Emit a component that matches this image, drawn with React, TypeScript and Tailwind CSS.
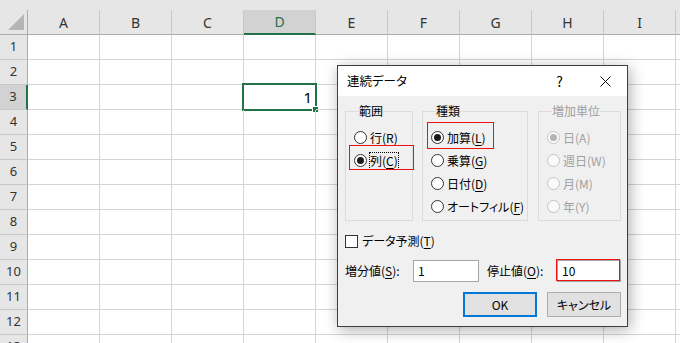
import React from 'react';

const cols = ['A', 'B', 'C', 'D', 'E', 'F', 'G', 'H', 'I'];
const rows = [1, 2, 3, 4, 5, 6, 7, 8, 9, 10, 11, 12, 13];

function Radio({ checked, disabled }: { checked?: boolean; disabled?: boolean }) {
  return (
    <span
      className={`flex h-[13px] w-[13px] shrink-0 items-center justify-center rounded-full border ${
        disabled ? 'border-[#c4c4c4] bg-[#fafafa]' : 'border-[#333] bg-white'
      }`}
    >
      {checked && (
        <span className={`h-[7px] w-[7px] rounded-full ${disabled ? 'bg-[#b4b4b4]' : 'bg-[#1a1a1a]'}`} />
      )}
    </span>
  );
}

function Option({
  text,
  hot,
  checked,
  disabled,
  focus,
}: {
  text: string;
  hot: string;
  checked?: boolean;
  disabled?: boolean;
  focus?: boolean;
}) {
  return (
    <div className="flex h-[23px] items-center gap-[3px]">
      <Radio checked={checked} disabled={disabled} />
      <span
        className={`leading-[16px] ${disabled ? 'text-[#a0a0a0]' : 'text-black'} ${
          focus ? 'outline-1 outline-dotted outline-[#000]' : ''
        }`}
      >
        {text}({disabled ? hot : <u className="underline-offset-2">{hot}</u>})
      </span>
    </div>
  );
}

function Group({
  label,
  width,
  disabled,
  children,
  className,
}: {
  label: string;
  width: string;
  disabled?: boolean;
  children: React.ReactNode;
  className?: string;
}) {
  return (
    <fieldset className={`${width} ${className ?? ''} border border-[#dcdcdc] pt-[7px] pb-[2px] pl-[8px]`}>
      <legend className={`ml-[5px] leading-[16px] ${disabled ? 'text-[#a0a0a0]' : 'text-black'}`}>{label}</legend>
      {children}
    </fieldset>
  );
}

function SeriesDialog() {
  return (
    <div className="absolute left-[337px] top-[65px] flex h-[262px] w-[291px] flex-col border border-[#3f3f3f] bg-[#f0f0f0] font-['Noto_Sans_CJK_JP',sans-serif] text-[12px] text-black shadow-[2px_3px_14px_rgba(0,0,0,0.32)] [font-feature-settings:'palt']">
      {/* title bar */}
      <div className="flex h-[30px] items-center bg-white pl-[9px]">
        <span className="flex-1 text-[12.5px]">連続データ</span>
        <span className="mr-[37px] text-[14px]">?</span>
        <svg width="11" height="11" viewBox="0 0 11 11" className="mr-[16px]">
          <path d="M0.5 0.5 L10.5 10.5 M10.5 0.5 L0.5 10.5" stroke="#111" strokeWidth="1" />
        </svg>
      </div>

      <div className="flex flex-col pt-[7px]">
        <div className="relative flex pl-[7px]">
          <Group label="範囲" width="w-[68px]">
            <Option text="行" hot="R" />
            <Option text="列" hot="C" checked focus />
          </Group>
          <Group label="種類" width="w-[106px]" className="ml-[9px]">
            <Option text="加算" hot="L" checked />
            <Option text="乗算" hot="G" />
            <Option text="日付" hot="D" />
            <Option text="オートフィル" hot="F" />
          </Group>
          <Group label="増加単位" width="w-[83px]" className="ml-[10px]" disabled>
            <Option text="日" hot="A" checked disabled />
            <Option text="週日" hot="W" disabled />
            <Option text="月" hot="M" disabled />
            <Option text="年" hot="Y" disabled />
          </Group>
          {/* red annotation boxes */}
          <div className="pointer-events-none absolute left-[11px] top-[42px] h-[25px] w-[65px] border border-[#ee1111]" />
          <div className="pointer-events-none absolute left-[89px] top-[19px] h-[27px] w-[67px] border border-[#ee1111]" />
        </div>

        {/* checkbox */}
        <div className="mt-[12px] flex h-[16px] items-center gap-[4px] pl-[7px]">
          <span className="h-[13px] w-[13px] border border-[#333] bg-white" />
          <span>
            データ予測(<u className="underline-offset-2">T</u>)
          </span>
        </div>

        {/* step / stop */}
        <div className="mt-[11px] flex h-[22px] items-center pl-[7px]">
          <span className="w-[68px]">
            増分値(<u className="underline-offset-2">S</u>):
          </span>
          <div className="flex h-[22px] w-[66px] items-center border border-[#a6a6a6] bg-white pl-[4px]">1</div>
          <span className="ml-[8px] w-[70px]">
            停止値(<u className="underline-offset-2">O</u>):
          </span>
          <div className="relative">
            <div className="flex h-[22px] w-[64px] items-center border border-[#a6a6a6] bg-white pl-[4px]">10</div>
            <div className="absolute -left-[1px] -top-[1px] h-[22px] w-[64px] border border-[#ee1111]" />
          </div>
        </div>

        {/* buttons */}
        <div className="mt-[10px] flex justify-end gap-[10px] pr-[6px]">
          <button className="flex h-[25px] w-[74px] items-center justify-center border-2 border-[#0078d7] bg-[#e1e1e1]">
            OK
          </button>
          <button className="flex h-[25px] w-[74px] items-center justify-center border border-[#adadad] bg-[#e1e1e1]">
            キャンセル
          </button>
        </div>
      </div>
    </div>
  );
}

export default function App() {
  return (
    <div className="relative h-[343px] w-[680px] overflow-hidden bg-white font-['Noto_Sans',sans-serif] text-[#333]">
      <div className="h-[10px] bg-[#e6e6e6]" />
      {/* column headers */}
      <div className="flex h-[25px] bg-[#e6e6e6]">
        <div className="flex w-[28px] shrink-0 items-end justify-end border-r border-b border-[#ababab] pr-[3px] pb-[4px]">
          <svg width="16" height="16" viewBox="0 0 16 16">
            <polygon points="16,0 16,16 0,16" fill="#b5b5b5" />
          </svg>
        </div>
        {cols.map((c) => (
          <div
            key={c}
            className={`flex w-[72px] shrink-0 items-center justify-center border-r border-[#c8c8c8] text-[14px] ${
              c === 'D'
                ? 'border-b-2 border-b-[#217346] bg-[#d2d2d2] text-[#217346]'
                : 'border-b border-b-[#ababab]'
            }`}
          >
            {c}
          </div>
        ))}
        <div className="flex-1 border-b border-[#ababab]" />
      </div>

      {/* rows */}
      {rows.map((r) => (
        <div key={r} className="flex h-[25px]">
          <div
            className={`flex w-[28px] shrink-0 items-center justify-center border-b border-b-[#c8c8c8] text-[13px] ${
              r === 3 ? 'border-r-2 border-r-[#217346] bg-[#d2d2d2]' : 'border-r border-r-[#ababab] bg-[#e6e6e6]'
            }`}
          >
            {r}
          </div>
          {cols.map((c) => (
            <div key={c} className="relative w-[72px] shrink-0 border-r border-b border-[#d4d4d4]">
              {r === 3 && c === 'D' && (
                <>
                  <div className="flex h-full items-center justify-end pr-[3px] text-[15px] text-black">1</div>
                  <div className="absolute -left-[2px] -top-[2px] h-[28px] w-[75px] border-2 border-[#217346]" />
                  <div className="absolute left-[68px] top-[21px] h-[7px] w-[7px] border border-white bg-[#217346]" />
                </>
              )}
            </div>
          ))}
          <div className="flex-1 border-b border-[#d4d4d4]" />
        </div>
      ))}

      <SeriesDialog />
    </div>
  );
}
